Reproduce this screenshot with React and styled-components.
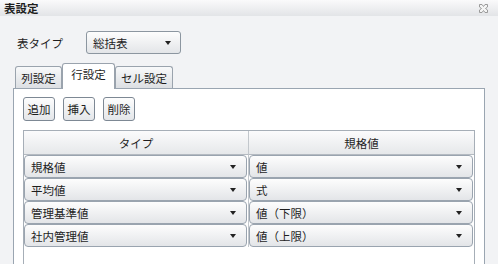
import React from 'react'
import styled, {createGlobalStyle} from 'styled-components'

const GlobalStyle = createGlobalStyle`
	html, body {
		margin: 0;
		padding: 0;
		background: #f2f3f5;
	}
	body {
		font-family: "Noto Sans CJK JP", "Noto Sans", sans-serif;
		font-size: 11.5px;
		color: #1e1e1e;
	}
`

const Window = styled.div`
	width: 498px;
	height: 264px;
	overflow: hidden;
	background: #f2f3f5;
	display: flex;
	flex-direction: column;
`

const TitleBar = styled.div`
	height: 16px;
	flex: none;
	display: flex;
	align-items: center;
	justify-content: space-between;
	padding: 0 10px 0 4px;
	background: linear-gradient(#fafafb, #e2e4e7);
	font-weight: bold;
	font-size: 11.5px;
	line-height: 16px;
`

const CloseIcon = () => (
	<svg width="9" height="9" viewBox="0 0 9 9">
		<path
			d="M0.5 0.5 L3 0.5 L4.5 2.5 L6 0.5 L8.5 0.5 L8.5 3 L6.5 4.5 L8.5 6 L8.5 8.5 L6 8.5 L4.5 6.5 L3 8.5 L0.5 8.5 L0.5 6 L2.5 4.5 L0.5 3 Z"
			fill="#f4f4f4"
			stroke="#9a9a9a"
			strokeWidth="1"
		/>
	</svg>
)

const Body = styled.div`
	flex: 1;
	display: flex;
	flex-direction: column;
	padding: 15px 13px 0 13px;
`

const TypeRow = styled.div`
	display: flex;
	align-items: center;
	padding-left: 4px;
`

const Label = styled.span`
	width: 69px;
`

const Select = styled.div`
	box-sizing: border-box;
	width: ${p => p.width || '95px'};
	height: 23px;
	display: flex;
	align-items: center;
	justify-content: space-between;
	padding: 0 9px 0 6px;
	border: 1px solid #8c96a0;
	border-radius: 3px;
	background: linear-gradient(#fdfdfd, #e3e5e8);
`

const Arrow = styled.span`
	width: 0;
	height: 0;
	border-left: 3.5px solid transparent;
	border-right: 3.5px solid transparent;
	border-top: 4px solid #222;
`

const Tabs = styled.div`
	display: flex;
	align-items: flex-end;
	margin-top: 9px;
	padding-left: 2px;
	height: 25px;
`

const Tab = styled.div`
	box-sizing: border-box;
	width: ${p => p.width};
	height: ${p => (p.active ? '26px' : '22px')};
	display: flex;
	justify-content: center;
	align-items: ${p => (p.active ? 'flex-start' : 'center')};
	padding-top: ${p => (p.active ? '2px' : '0')};
	border: 1px solid #9aa3ad;
	border-bottom: none;
	border-radius: 3px 3px 0 0;
	background: ${p => (p.active ? '#ffffff' : 'linear-gradient(#f8f9fa, #dcdfe3)')};
	margin-bottom: ${p => (p.active ? '-1px' : '0')};
	position: relative;
	z-index: ${p => (p.active ? 1 : 0)};
`

const Panel = styled.div`
	flex: 1;
	background: #ffffff;
	border: 1px solid #9aa5b1;
	border-bottom: none;
	padding: 8px 9px 0 9px;
	display: flex;
	flex-direction: column;
`

const ButtonBar = styled.div`
	display: flex;
	gap: 8px;
`

const Button = styled.div`
	box-sizing: border-box;
	width: 32px;
	height: 24px;
	display: flex;
	align-items: center;
	justify-content: center;
	border: 1px solid #7d8894;
	border-radius: 3px;
	background: linear-gradient(#fdfdfd, #e4e6e9);
`

const Table = styled.div`
	margin-top: 9px;
	flex: 1;
	border: 1px solid #a6aeb7;
	border-bottom: none;
	display: grid;
	grid-template-columns: 224px 1fr;
	grid-auto-rows: min-content;
`

const HeaderCell = styled.div`
	height: 23px;
	display: flex;
	align-items: center;
	justify-content: center;
	background: linear-gradient(#fbfbfc, #e6e8ea);
	border-bottom: 1px solid #b4bac1;
	border-left: ${p => (p.second ? '1px solid #c2c7cc' : 'none')};
`

const Cell = styled.div`
	padding: 0 1px 0 0;
	border-left: ${p => (p.second ? '1px solid #c2c7cc' : 'none')};
`

const CellSelect = styled(Select)`
	width: 100%;
	border-radius: 4px;
	border-color: #9aa4af;
	padding: 0 10px 0 6px;
`

const rows = [
	['規格値', '値'],
	['平均値', '式'],
	['管理基準値', '値（下限）'],
	['社内管理値', '値（上限）'],
]

export default function App() {
	return (
		<Window>
			<GlobalStyle />
			<TitleBar>
				<span>表設定</span>
				<CloseIcon />
			</TitleBar>
			<Body>
				<TypeRow>
					<Label>表タイプ</Label>
					<Select>
						<span>総括表</span>
						<Arrow />
					</Select>
				</TypeRow>
				<Tabs>
					<Tab width="47px">列設定</Tab>
					<Tab width="53px" active>行設定</Tab>
					<Tab width="58px">セル設定</Tab>
				</Tabs>
				<Panel>
					<ButtonBar>
						<Button>追加</Button>
						<Button>挿入</Button>
						<Button>削除</Button>
					</ButtonBar>
					<Table>
						<HeaderCell>タイプ</HeaderCell>
						<HeaderCell second>規格値</HeaderCell>
						{rows.map(([type, value]) => (
							<React.Fragment key={type}>
								<Cell>
									<CellSelect>
										<span>{type}</span>
										<Arrow />
									</CellSelect>
								</Cell>
								<Cell second>
									<CellSelect>
										<span>{value}</span>
										<Arrow />
									</CellSelect>
								</Cell>
							</React.Fragment>
						))}
					</Table>
				</Panel>
			</Body>
		</Window>
	)
}
